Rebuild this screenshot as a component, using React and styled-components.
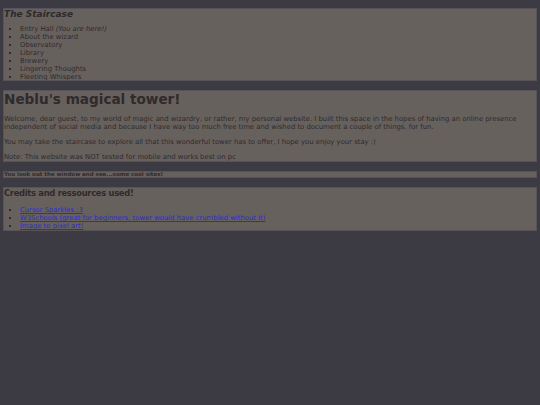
import React from "react";
import styled, { createGlobalStyle } from "styled-components";

const Global = createGlobalStyle`
  html, body { margin: 0; padding: 0; background: #3c3b43; }
  body { font-family: "DejaVu Sans", Verdana, sans-serif; color: #2f2a2c; }
`;

const Page = styled.div`
  display: flex;
  flex-direction: column;
  gap: 9px;
  padding: 8px 3px;
`;

const Panel = styled.section`
  background: #67615d;
  border: 1px solid #58535a;
  height: ${p => (p.$h ? `${p.$h}px` : "auto")};
  overflow: hidden;
  box-sizing: border-box;
`;

const NavTitle = styled.h3`
  margin: 0;
  font-size: 9px;
  line-height: 10px;
  font-weight: bold;
  font-style: italic;
`;

const List = styled.ul`
  margin: ${p => p.$mt ?? 6}px 0 0;
  padding-left: 16px;
  font-size: 6.85px;
  line-height: 8px;
  list-style: square;
  li::marker { font-size: 6px; }
`;

const Item = styled.li``;

const Title = styled.h1`
  margin: 0;
  font-size: 13.6px;
  line-height: 17px;
  font-weight: bold;
`;

const Para = styled.p`
  margin: 7px 0 0;
  font-size: 6.85px;
  line-height: 8px;
`;

const Bar = styled.h6`
  margin: 0;
  font-size: 5.5px;
  line-height: 5px;
  font-weight: bold;
`;

const Sub = styled.h3`
  margin: 0;
  font-size: 8.4px;
  line-height: 10px;
  letter-spacing: -0.3px;
  font-weight: bold;
`;

const Link = styled.a`
  color: #2a2bd3;
  text-decoration: underline;
`;

export default function App() {
  return (
    <>
      <Global />
      <Page>
        <Panel $h={73}>
          <NavTitle>The Staircase</NavTitle>
          <List>
            <Item>Entry Hall <i>(You are here!)</i></Item>
            <Item>About the wizard</Item>
            <Item>Observatory</Item>
            <Item>Library</Item>
            <Item>Brewery</Item>
            <Item>Lingering Thoughts</Item>
            <Item>Fleeting Whispers</Item>
          </List>
        </Panel>
        <Panel>
          <Title>Neblu's magical tower!</Title>
          <Para>
            Welcome, dear guest, to my world of magic and wizardry, or rather, my personal website. I built this space in the hopes of having an online presence independent of social media and because I have way too much free time and wished to document a couple of things, for fun.
          </Para>
          <Para>You may take the staircase to explore all that this wonderful tower has to offer, I hope you enjoy your stay :)</Para>
          <Para>Note: This website was NOT tested for mobile and works best on pc</Para>
        </Panel>
        <Panel>
          <Bar>You look out the window and see...some cool sites!</Bar>
        </Panel>
        <Panel>
          <Sub>Credits and ressources used!</Sub>
          <List $mt={8}>
            <Item><Link href="#">Cursor Sparkles :3</Link></Item>
            <Item><Link href="#">W3Schools (great for beginners, tower would have crumbled without it)</Link></Item>
            <Item><Link href="#">Image to pixel art!</Link></Item>
          </List>
        </Panel>
      </Page>
    </>
  );
}
